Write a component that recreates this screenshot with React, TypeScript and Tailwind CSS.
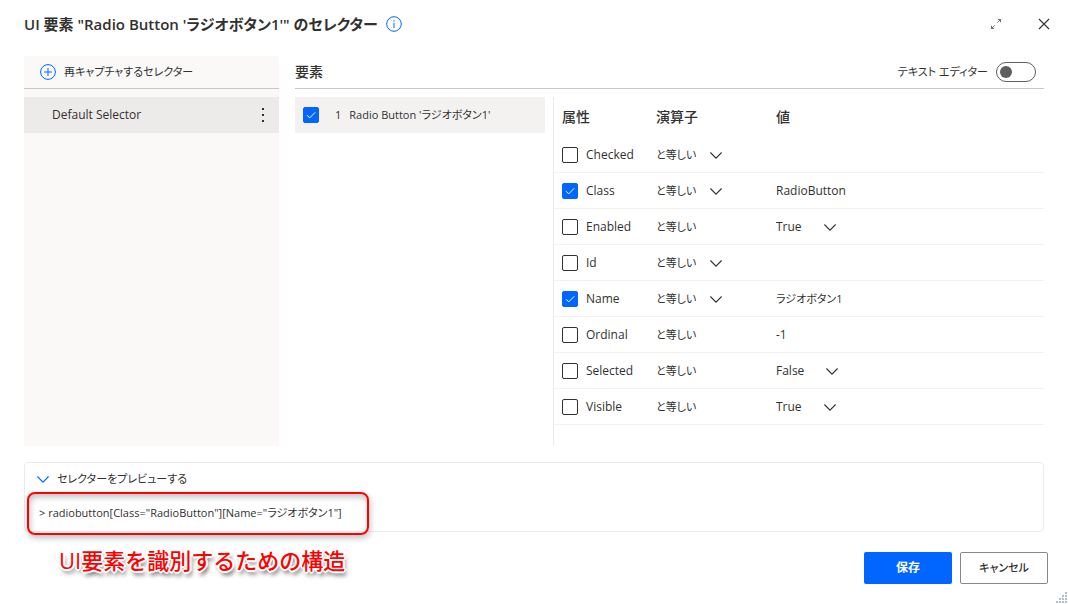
import { useState } from 'react'

type Attribute = {
  name: string
  checked: boolean
  editable: boolean
  value: string
  options?: string[]
}

const BOOL = ['True', 'False']

const ATTRIBUTES: Attribute[] = [
  { name: 'Checked', checked: false, editable: true, value: '' },
  { name: 'Class', checked: true, editable: true, value: 'RadioButton' },
  { name: 'Enabled', checked: false, editable: false, value: 'True', options: BOOL },
  { name: 'Id', checked: false, editable: true, value: '' },
  { name: 'Name', checked: true, editable: true, value: 'ラジオボタン1' },
  { name: 'Ordinal', checked: false, editable: false, value: '-1' },
  { name: 'Selected', checked: false, editable: false, value: 'False', options: BOOL },
  { name: 'Visible', checked: false, editable: false, value: 'True', options: BOOL },
]

const OPERATORS = ['と等しい', 'と等しくない', '次を含む']

function Chevron({ className = '' }: { className?: string }) {
  return (
    <svg viewBox="0 0 12 7" className={`w-3 h-[7px] ${className}`} fill="none" stroke="currentColor" strokeWidth="1.1">
      <path d="M0.4 0.5 6 6.1 11.6 0.5" />
    </svg>
  )
}

function Checkbox({ id, defaultChecked }: { id: string; defaultChecked: boolean }) {
  return (
    <span className="relative block size-4 shrink-0">
      <input
        id={id}
        type="checkbox"
        defaultChecked={defaultChecked}
        className="peer block size-4 appearance-none rounded-[2px] border border-[#323130] bg-white checked:border-[#0066ff] checked:bg-[#0066ff]"
      />
      <svg viewBox="0 0 16 16" className="pointer-events-none absolute inset-0 hidden size-4 text-white peer-checked:block" fill="none" stroke="currentColor">
        <path d="M4 8.2 6.7 10.9 12.2 5.3" />
      </svg>
    </span>
  )
}

function Dropdown({ label, value, options, wide }: { label: string; value: string; options: string[]; wide?: boolean }) {
  return (
    <span className="relative inline-flex items-center align-middle">
      <select
        aria-label={label}
        defaultValue={value}
        className={`appearance-none bg-transparent leading-4 [field-sizing:content] ${wide ? 'pr-[34px]' : 'pr-[26px]'}`}
      >
        {options.map(o => (
          <option key={o}>{o}</option>
        ))}
      </select>
      <Chevron className="pointer-events-none absolute right-0" />
    </span>
  )
}

export default function App() {
  const [open, setOpen] = useState(true)

  return (
    <div className="relative flex min-h-screen flex-col bg-white px-6 pb-5 font-['Open_Sans','Noto_Sans_CJK_JP',sans-serif] text-xs text-[#323130] [font-feature-settings:'palt']">
      {/* Title bar */}
      <header className="flex h-14 items-start justify-between">
        <div className="flex items-center gap-2 pt-3">
          <h1 className="text-[15px] leading-6 font-semibold">UI 要素 "Radio Button 'ラジオボタン1'" のセレクター</h1>
          <button type="button" aria-label="情報" className="text-[#0066ff]">
            <svg viewBox="0 0 16 16" className="size-4" fill="none" stroke="currentColor">
              <circle cx="8" cy="8" r="7.3" />
              <path d="M8 6.8V12M8 4.2V5.6" />
            </svg>
          </button>
        </div>
        <div className="flex items-center gap-8 pt-4">
          <button type="button" aria-label="最大化" className="text-[#605e5c]">
            <svg viewBox="0 0 16 16" className="size-4" fill="none" stroke="currentColor" strokeWidth="0.9">
              <path d="M9.4 6.6 12.5 3.5M9.8 3.5H12.5V6.2M6.6 9.4 3.5 12.5M3.5 9.8V12.5H6.2" />
            </svg>
          </button>
          <button type="button" aria-label="閉じる" className="-mr-2">
            <svg viewBox="0 0 16 16" className="size-4" fill="none" stroke="currentColor" strokeWidth="1.1">
              <path d="M3 3 13 13M13 3 3 13" />
            </svg>
          </button>
        </div>
      </header>

      <main className="flex flex-1 gap-4">
        {/* Selector list */}
        <aside className="w-[255px] shrink-0 bg-[#faf9f8]">
          <button type="button" className="flex h-[33px] w-full items-center gap-2 border-b border-[#c8c6c4] pl-4 text-[11px]">
            <svg viewBox="0 0 16 16" className="size-4 text-[#0066ff]" fill="none" stroke="currentColor">
              <circle cx="8" cy="8" r="7.4" />
              <path d="M8 4V12M4 8H12" />
            </svg>
            再キャプチャするセレクター
          </button>
          <div className="mt-2 flex h-9 items-center justify-between bg-[#edebe9] pr-[10px] pl-7">
            <span>Default Selector</span>
            <button type="button" aria-label="その他" className="px-1">
              <svg viewBox="0 0 4 16" className="h-4 w-1" fill="currentColor">
                <rect x="1" y="1" width="2" height="2" />
                <rect x="1" y="7" width="2" height="2" />
                <rect x="1" y="13" width="2" height="2" />
              </svg>
            </button>
          </div>
        </aside>

        <section className="flex min-w-0 flex-1 flex-col">
          <div className="flex h-[33px] items-center justify-between border-b border-[#c8c6c4] pr-2">
            <h2 className="text-sm font-medium">要素</h2>
            <label className="flex items-center gap-2 text-[11px]">
              テキスト エディター
              <input
                type="checkbox"
                role="switch"
                className="flex h-5 w-10 appearance-none items-center rounded-full border border-[#605e5c] bg-white px-[3px] before:size-3 before:rounded-full before:bg-[#605e5c] checked:justify-end"
              />
            </label>
          </div>

          <div className="mt-2 flex flex-1 gap-2">
            {/* Elements */}
            <div className="w-[250px] shrink-0">
              <div className="flex h-9 items-center bg-[#f3f2f1] pl-2">
                <Checkbox id="element-1" defaultChecked />
                <label htmlFor="element-1" className="flex gap-2 pl-4 text-[11px]">
                  <span>1</span>
                  <span>Radio Button 'ラジオボタン1'</span>
                </label>
              </div>
            </div>

            {/* Attributes of the selected element */}
            <div className="min-w-0 flex-1 border-l border-[#edebe9]">
              <table className="w-full table-fixed border-separate border-spacing-0 text-left">
                <thead>
                  <tr className="h-10 text-sm">
                    <th className="w-[102px] pl-2 font-medium">属性</th>
                    <th className="w-[120px] font-medium">演算子</th>
                    <th className="font-medium">値</th>
                  </tr>
                </thead>
                <tbody>
                  {ATTRIBUTES.map(a => (
                    <tr key={a.name} className="h-9">
                      <td className="border-b border-[#f3f2f1] pt-px pl-2">
                        <div className="flex items-center gap-2">
                          <Checkbox id={a.name} defaultChecked={a.checked} />
                          <label htmlFor={a.name}>{a.name}</label>
                        </div>
                      </td>
                      <td className="border-b border-[#f3f2f1] pt-px text-[11px]">
                        {a.editable ? <Dropdown label={`${a.name} 演算子`} value="と等しい" options={OPERATORS} /> : 'と等しい'}
                      </td>
                      <td className={`border-b border-[#f3f2f1] pt-px ${a.name === 'Name' ? 'text-[11px]' : ''}`}>
                        {a.options ? (
                          <Dropdown label={`${a.name} 値`} value={a.value} options={a.options} wide />
                        ) : (
                          <input type="text" aria-label={`${a.name} 値`} defaultValue={a.value} className="block w-full bg-transparent outline-none" />
                        )}
                      </td>
                    </tr>
                  ))}
                </tbody>
              </table>
            </div>
          </div>
        </section>
      </main>

      {/* Preview */}
      <section className="relative mt-4 h-[70px] rounded border border-[#edebe9] text-[11px]">
        <button type="button" onClick={() => setOpen(!open)} aria-expanded={open} className="flex h-8 items-center gap-2 pl-3">
          <Chevron className="text-[#0066ff]" />
          セレクターをプレビューする
        </button>
        {open && <p className="pt-[10px] pl-[14px] leading-4">{'> radiobutton[Class="RadioButton"][Name="ラジオボタン1"]'}</p>}

        {/* Callout */}
        <div className="pointer-events-none absolute top-[29px] left-[2px] h-[43px] w-[342px] rounded-lg border-2 border-[#ff0000] shadow-[1px_3px_6px_rgba(0,0,0,0.25),inset_1px_3px_6px_rgba(0,0,0,0.25)]" />
        <p className="pointer-events-none absolute top-[81px] left-[34px] text-[22px] leading-8 font-medium whitespace-nowrap text-[#ff0000] [font-feature-settings:normal] [text-shadow:-1px_-1px_0_#fff,1px_-1px_0_#fff,-1px_1px_0_#fff,1px_1px_0_#fff,2px_0_0_#fff,-2px_0_0_#fff,0_2px_0_#fff,0_-2px_0_#fff,2px_4px_4px_rgba(0,0,0,0.7)]">
          UI要素を識別するための構造
        </p>
      </section>

      <footer className="-mr-1 mt-5 flex justify-end gap-2">
        <button type="button" className="h-8 w-[88px] rounded-[2px] bg-[#0066ff] font-semibold text-white">保存</button>
        <button type="button" className="h-8 w-[88px] rounded-[2px] border border-[#8a8886] text-[11px] font-medium">キャンセル</button>
      </footer>

      {/* Resize grip */}
      <svg viewBox="0 0 12 12" className="absolute right-0 bottom-0 size-3" fill="#b4bccb">
        {[[9, 0], [6, 3], [9, 3], [3, 6], [6, 6], [9, 6], [0, 9], [3, 9], [6, 9], [9, 9]].map(([x, y]) => (
          <rect key={`${x}-${y}`} x={x} y={y} width="2" height="2" />
        ))}
      </svg>
    </div>
  )
}
